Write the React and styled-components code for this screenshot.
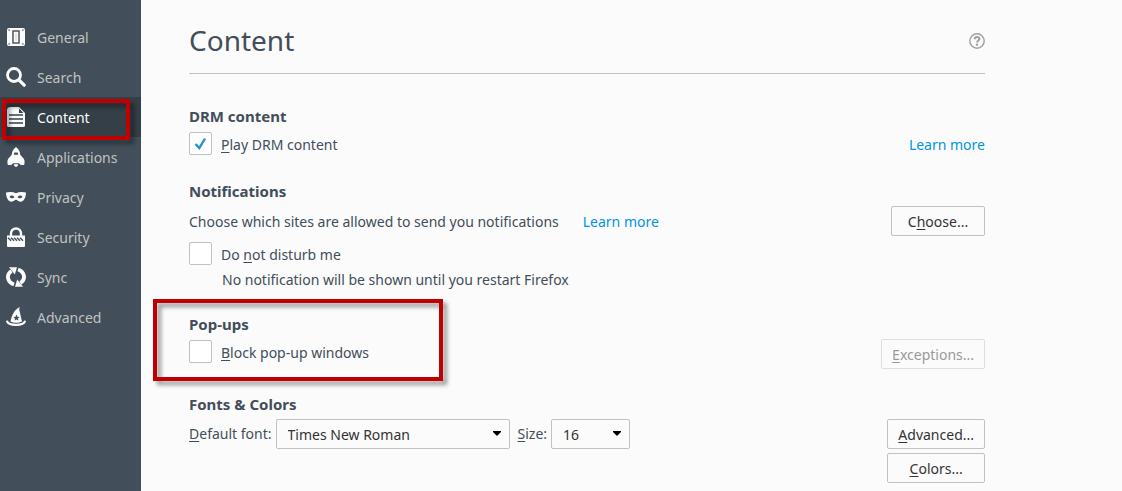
import React, { useState } from 'react'
import styled, { createGlobalStyle } from 'styled-components'

const GeneralIcon = () => (
  <Icon viewBox="0 0 20 20">
    <rect x="1" y="1" width="18" height="18" rx="2" />
    <rect x="7" y="4" width="6" height="12" fill="#fcfcfc" stroke="#5b5f62" strokeWidth="1.6" />
    <path d="M10 6v8" stroke="#d4d6d8" strokeWidth="1.2" />
    <path
      fill="#424f5a"
      d="M2.500 2.500h1.300v1.300H2.500zM16.200 2.500h1.300v1.300h-1.300zM2.500 16.200h1.300v1.300H2.500zM16.200 16.200h1.300v1.300h-1.300z"
    />
  </Icon>
)

const SearchIcon = () => (
  <Icon viewBox="0 0 20 20">
    <circle cx="8" cy="8" r="6.5" fill="none" stroke="#fcfcfc" strokeWidth="2.8" />
    <path d="M13 13l5.2 5.2" stroke="#fcfcfc" strokeWidth="3.2" strokeLinecap="round" />
  </Icon>
)

const ContentIcon = () => (
  <Icon viewBox="0 0 20 20">
    <path d="M4.500 0H13l6 6v12.500a1.500 1.500 0 0 1-1.500 1.500h-15A1.500 1.500 0 0 1 1 18.500v-15A3.500 3.500 0 0 1 4.500 0z" />
    <path d="M13 1.500v4.500h4.500z" fill="#36424b" />
    <path d="M3 8h14M3 12h14M3 16h14" stroke="#36424b" strokeWidth="1.400" />
  </Icon>
)

const ApplicationsIcon = () => (
  <Icon viewBox="0 0 20 20">
    <path d="M10 0c2.800 2 4.200 5 4.200 7.800l3.600 4c1 2 1 4 .3 6.200h-3.300L13 16.300H7L5.200 18H1.900c-.7-2.200-.7-4.200.3-6.200l3.600-4C5.800 5 7.200 2 10 0z" />
    <path d="M7.800 17.300h4.400L11.700 19 10 20 8.300 19z" />
    <path d="M8.300 5.500h3.400l.5 2.300H7.800z" fill="#424f5a" />
  </Icon>
)

const PrivacyIcon = () => (
  <Icon viewBox="0 0 20 20">
    <path
      fillRule="evenodd"
      d="M0 5.500c3-.8 6.800-1 10 .7 3.200-1.700 7-1.500 10-.7-.1 4.500-1.800 9.200-5.700 9.200-2 0-3-1.900-4.300-1.900s-2.300 1.900-4.300 1.900C1.800 14.700.1 10 0 5.500zM3.500 9.700c1.400 1.900 3.600 2 5 .5-1.200-2-3.600-2.300-5-.5zm13 0c-1.400-1.800-3.800-1.500-5 .5 1.400 1.500 3.600 1.400 5-.5z"
    />
  </Icon>
)

const SecurityIcon = () => (
  <Icon viewBox="0 0 20 20">
    <path d="M5 9V6.500a5 5 0 0 1 10 0V9" fill="none" stroke="#fcfcfc" strokeWidth="2.400" />
    <path d="M1 8.500h18V19a1 1 0 0 1-1 1H2a1 1 0 0 1-1-1z" />
    <path
      d="M2 10.800l3 3M5 10.800l3 3M8 10.800l3 3M11 10.800l3 3M14 10.800l3 3"
      stroke="#424f5a"
      strokeWidth="1.400"
    />
  </Icon>
)

const SyncIcon = () => (
  <Icon viewBox="0 0 20 20">
    <path d="M8 17.500C1 15 0 7.500 5.500 4" fill="none" stroke="#fcfcfc" strokeWidth="3.800" />
    <path d="M3 .2h8L8.800 7.500z" />
    <path d="M12 2.500C19 5 20 12.500 14.500 16" fill="none" stroke="#fcfcfc" strokeWidth="3.800" />
    <path d="M17 19.800H9l2.200-7.300z" />
  </Icon>
)

const AdvancedIcon = () => (
  <Icon viewBox="0 0 20 20">
    <path d="M14 0c-.8 1.400-1 2.500-.4 4.300L16 14.500c-3.500 1.700-8.500 1.700-11.500 0C5.600 9.500 7.500 2.800 14 0z" />
    <path
      d="M1.200 14.500c1 4.400 16.600 4.400 17.600 0"
      fill="none"
      stroke="#fcfcfc"
      strokeWidth="2.200"
      strokeLinecap="round"
    />
    <path
      d="M10.500 7.600l.9 2.100 2.200.2-1.700 1.500.6 2.200-2-1.200-2 1.200.6-2.200-1.700-1.500 2.200-.2z"
      fill="#424f5a"
    />
  </Icon>
)

const categories = [
  { name: 'General', icon: GeneralIcon },
  { name: 'Search', icon: SearchIcon },
  { name: 'Content', icon: ContentIcon },
  { name: 'Applications', icon: ApplicationsIcon },
  { name: 'Privacy', icon: PrivacyIcon },
  { name: 'Security', icon: SecurityIcon },
  { name: 'Sync', icon: SyncIcon },
  { name: 'Advanced', icon: AdvancedIcon }
]

const Check = ({ children, ...props }) => (
  <CheckLabel>
    <CheckInput type="checkbox" {...props} />
    <CheckMark viewBox="0 0 13 13">
      <path d="M1.500 7l3.800 4L11 1.500" fill="none" stroke="#2292d0" strokeWidth="2.400" />
    </CheckMark>
    <Caption>{children}</Caption>
  </CheckLabel>
)

const Dropdown = ({ id, width, options }) => (
  <SelectBox $width={width}>
    <Select id={id}>
      {options.map(option => (
        <option key={option}>{option}</option>
      ))}
    </Select>
    <Arrow viewBox="0 0 10 6">
      <path d="M1 0h8v1L5 5 1 1z" />
    </Arrow>
  </SelectBox>
)

const App = () => {
  const [selected, setSelected] = useState('Content')

  return (
    <Page>
      <GlobalStyle />
      <Sidebar>
        {categories.map(({ name, icon: CategoryIcon }) => (
          <Category key={name} $active={name === selected} onClick={() => setSelected(name)}>
            <CategoryIcon />
            <Caption>{name}</Caption>
            {name === 'Content' && <CategoryMarker />}
          </Category>
        ))}
      </Sidebar>
      <Main>
        <Header>
          <Title>Content</Title>
          <HelpButton aria-label="Help">
            <svg width="16" height="16" viewBox="0 0 16 16" fill="none" stroke="#a0a0a0">
              <circle cx="8" cy="8" r="7.200" strokeWidth="1.400" />
              <path
                d="M5.700 6.200c0-3 4.700-2.800 4.700-.4C10.400 7.500 8 7.400 8 9.600"
                strokeWidth="2"
              />
              <path d="M8 10.700v2" strokeWidth="2.200" />
            </svg>
          </HelpButton>
        </Header>

        <Section>
          <Heading>DRM content</Heading>
          <Row>
            <Check defaultChecked>
              <u>P</u>lay DRM content
            </Check>
            <Caption>
              <Link href="#drm">Learn more</Link>
            </Caption>
          </Row>
        </Section>

        <Section>
          <Heading>Notifications</Heading>
          <Row>
            <Notice>
              Choose which sites are allowed to send you notifications
              <Link href="#notifications">Learn more</Link>
            </Notice>
            <Button>
              C<u>h</u>oose...
            </Button>
          </Row>
          <Row>
            <Check>
              Do <u>n</u>ot disturb me
            </Check>
          </Row>
          <Note>No notification will be shown until you restart Firefox</Note>
        </Section>

        <Section>
          <Heading>Pop-ups</Heading>
          <TopRow>
            <Check>
              <u>B</u>lock pop-up windows
            </Check>
            <Button disabled>
              <u>E</u>xceptions...
            </Button>
          </TopRow>
          <PopupMarker />
        </Section>

        <Section>
          <Heading>Fonts &amp; Colors</Heading>
          <TopRow>
            <Fields>
              <label htmlFor="font">
                <u>D</u>efault font:
              </label>
              <Dropdown id="font" width={234} options={['Times New Roman', 'Arial', 'Georgia']} />
              <SizeLabel htmlFor="size">
                <u>S</u>ize:
              </SizeLabel>
              <Dropdown id="size" width={79} options={['16', '18', '20']} />
            </Fields>
            <ButtonStack>
              <Button>
                <u>A</u>dvanced...
              </Button>
              <Button>
                <u>C</u>olors...
              </Button>
            </ButtonStack>
          </TopRow>
        </Section>
      </Main>
    </Page>
  )
}

export default App

// Styles
const GlobalStyle = createGlobalStyle`
  * {
    box-sizing: border-box;
  }

  body {
    margin: 0;
    background: #fbfbfb;
    color: #424e5a;
    font: 14px/20px 'Noto Sans', 'Open Sans', sans-serif;
  }

  button, select {
    font: inherit;
  }

  u {
    text-underline-offset: 2px;
  }
`

const Page = styled.div`
  display: flex;
  min-height: 100vh;
`

const Sidebar = styled.nav`
  flex: none;
  width: 141px;
  padding-top: 17px;
  background: #424f5a;
`

const Category = styled.button`
  position: relative;
  display: flex;
  align-items: center;
  gap: 11px;
  width: 100%;
  height: 40px;
  padding: 0 6px;
  border: 0;
  background: ${({ $active }) => ($active ? '#343f48' : 'transparent')};
  color: ${({ $active }) => ($active ? '#fcfcfc' : '#c1c1c1')};
  cursor: pointer;
`

const Caption = styled.span`
  padding-top: 2px;
`

const Icon = styled.svg`
  flex: none;
  width: 20px;
  height: 20px;
  fill: #fcfcfc;
`

const Marker = styled.span`
  position: absolute;
  border: 4px solid #c00000;
  filter: drop-shadow(4px 4px 2px rgba(0, 0, 0, 0.4));
  pointer-events: none;
`

const CategoryMarker = styled(Marker)`
  z-index: 1;
  top: 2px;
  left: 2px;
  width: 128px;
  height: 41px;
`

const PopupMarker = styled(Marker)`
  top: -15px;
  left: -36px;
  width: 290px;
  height: 82px;
`

const Main = styled.main`
  flex: 1;
  max-width: 892px;
  padding: 0 48px;
`

const Header = styled.header`
  display: flex;
  align-items: center;
  justify-content: space-between;
  height: 74px;
  padding-top: 8px;
  margin-bottom: 32px;
  border-bottom: 1px solid #c1c1c1;
`

const Title = styled.h1`
  margin: 0;
  padding-bottom: 2px;
  font-size: 28px;
  line-height: 40px;
  font-weight: 400;
`

const HelpButton = styled.button`
  display: flex;
  padding: 0;
  border: 0;
  background: none;
  cursor: pointer;
`

const Section = styled.section`
  position: relative;
  display: grid;
  gap: 5px;
  margin-bottom: 25px;

  &:last-child {
    margin-bottom: 0;
    padding-bottom: 8px;
  }
`

const Heading = styled.h2`
  margin: 0;
  font-size: 15px;
  line-height: 20px;
  font-weight: 700;
`

const Row = styled.div`
  display: flex;
  align-items: center;
  justify-content: space-between;
`

const TopRow = styled(Row)`
  align-items: flex-start;
`

const CheckLabel = styled.label`
  display: grid;
  grid-template-columns: 23px auto;
  align-items: center;
  column-gap: 9px;
  min-height: 25px;
`

const CheckInput = styled.input`
  grid-area: 1 / 1;
  appearance: none;
  width: 23px;
  height: 23px;
  margin: 0;
  border: 1px solid #c1c1c1;
  border-radius: 2px;
  background: #fff;
`

const CheckMark = styled.svg`
  grid-area: 1 / 1;
  justify-self: center;
  width: 13px;
  height: 13px;
  pointer-events: none;

  ${CheckInput}:not(:checked) + & {
    visibility: hidden;
  }
`

const Link = styled.a`
  color: #0095dd;
  text-decoration: none;
`

const Notice = styled.div`
  display: flex;
  gap: 24px;
  padding-top: 2px;
`

const Note = styled.p`
  margin: 0;
  padding-left: 33px;
  line-height: 18px;
`

const Button = styled.button`
  min-width: 94px;
  height: 30px;
  padding: 2px 10px 0;
  border: 1px solid #c1c1c1;
  border-radius: 2px;
  background: #fbfbfb;
  color: #333;

  &:disabled {
    border-color: #dedede;
    color: #999;
  }
`

const ButtonStack = styled.div`
  display: grid;
  gap: 4px;
`

const Fields = styled.div`
  display: flex;
  align-items: center;
  gap: 4px;
`

const SizeLabel = styled.label`
  margin-left: 4px;
`

const SelectBox = styled.div`
  position: relative;
  width: ${({ $width }) => $width}px;
`

const Select = styled.select`
  appearance: none;
  display: block;
  width: 100%;
  height: 30px;
  padding: 2px 24px 0 11px;
  border: 1px solid #c1c1c1;
  border-radius: 2px;
  background: #fbfbfb;
  color: #333;
`

const Arrow = styled.svg`
  position: absolute;
  top: 12px;
  right: 8px;
  width: 10px;
  height: 6px;
  pointer-events: none;
`
